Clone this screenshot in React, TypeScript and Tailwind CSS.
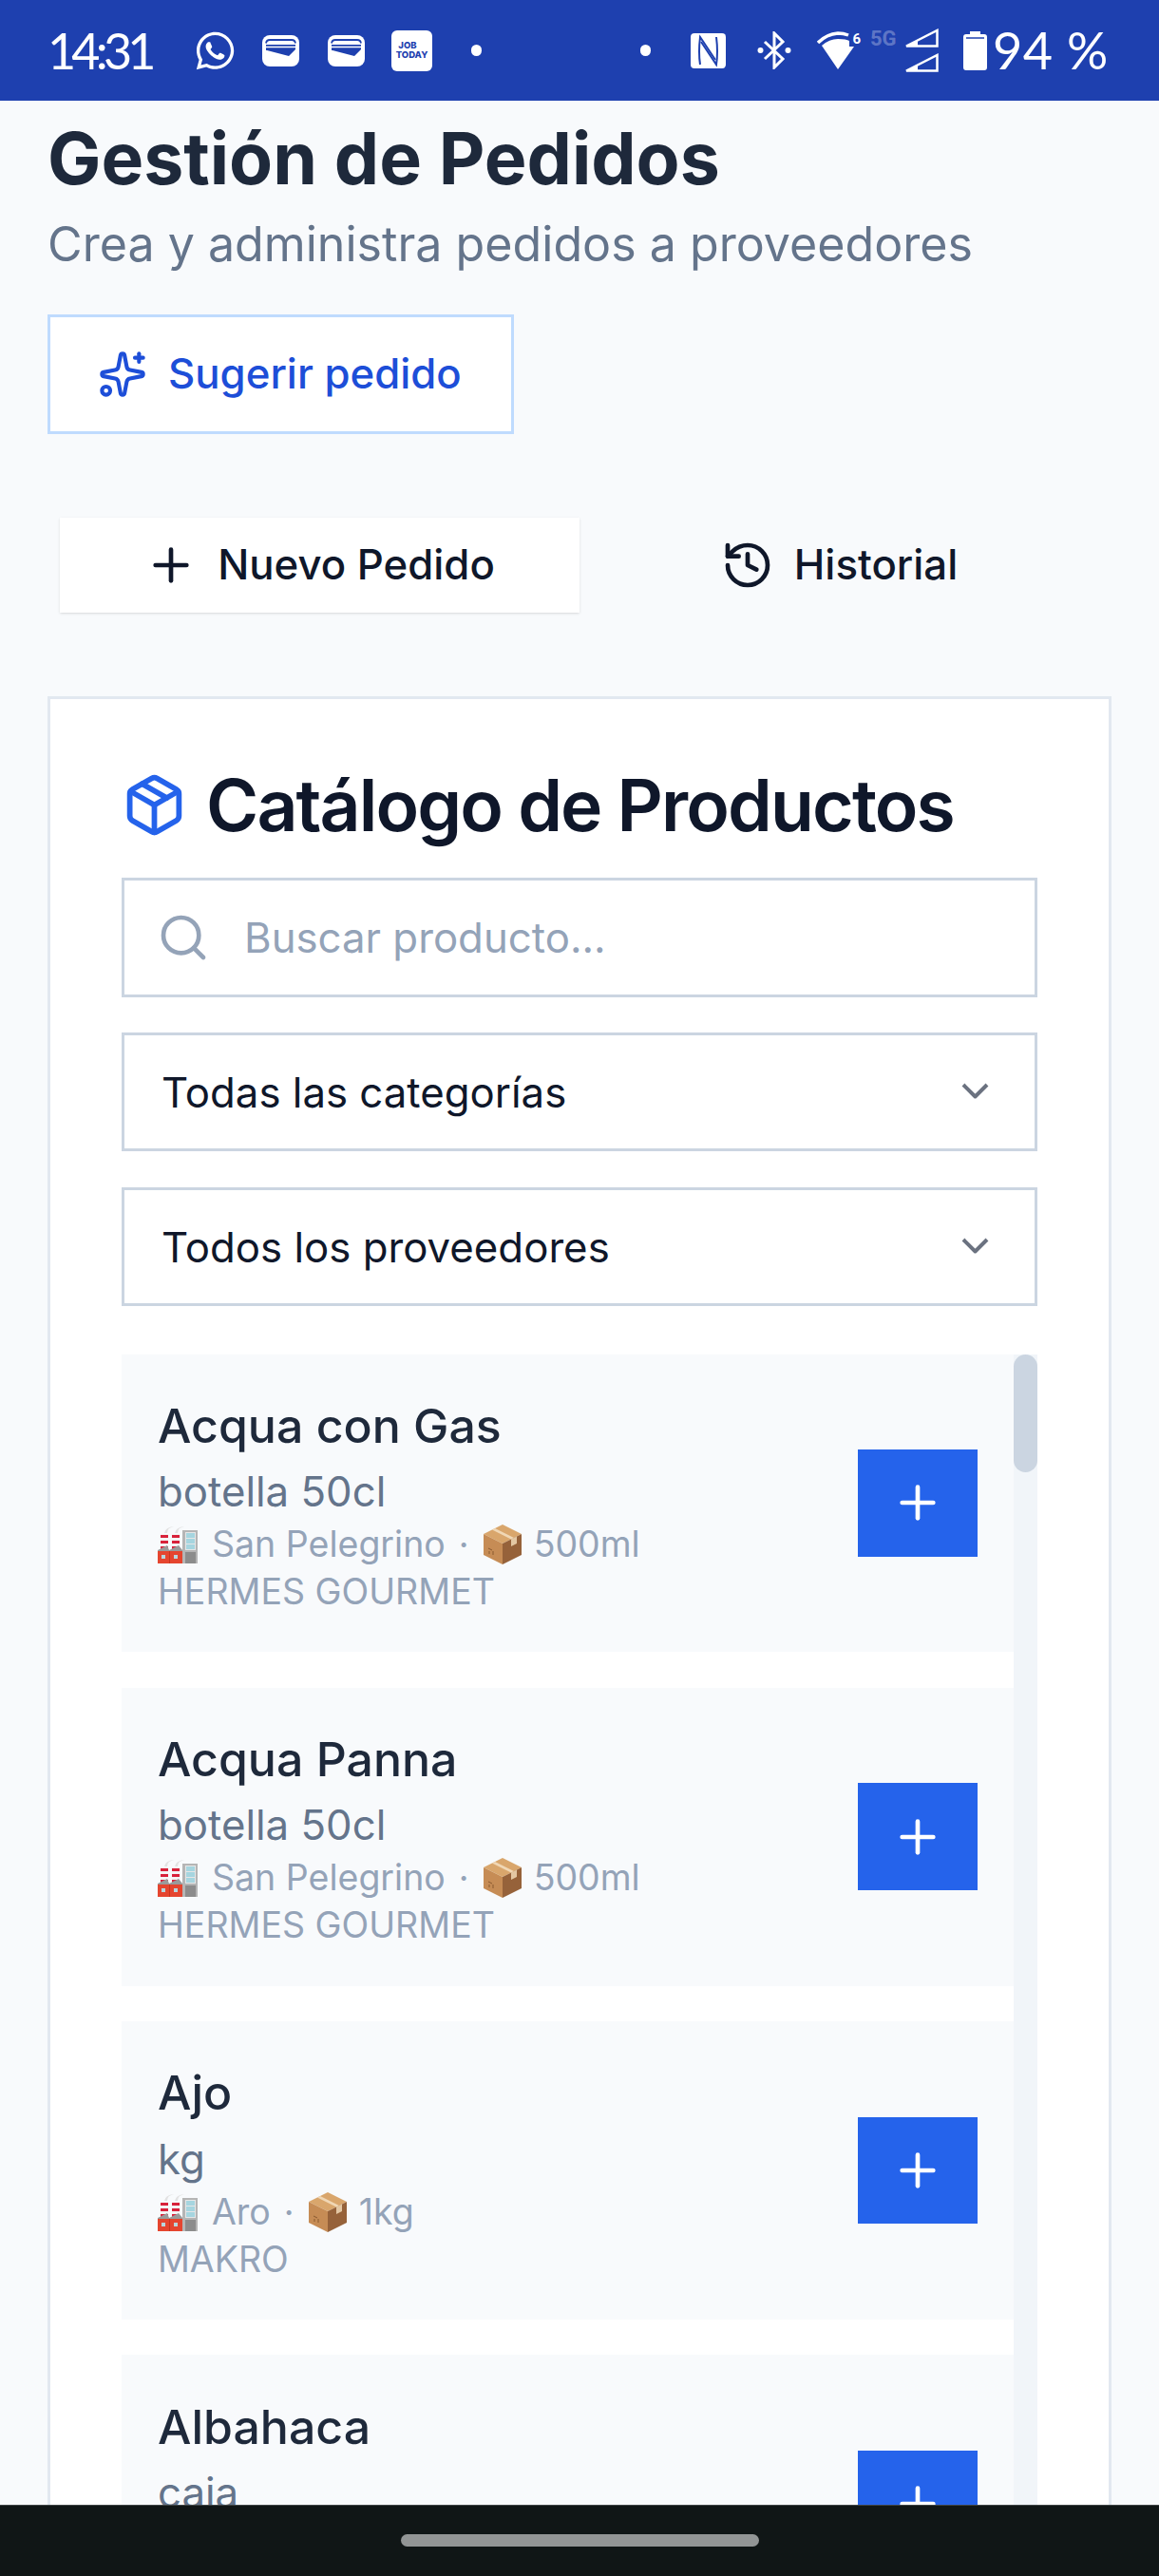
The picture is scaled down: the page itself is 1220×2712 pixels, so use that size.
import { History, Package, Plus, Search, Sparkles } from "lucide-react";
import { FaWhatsapp } from "react-icons/fa";

const products = [
  { name: "Acqua con Gas", unit: "botella 50cl", brand: "San Pelegrino", size: "500ml", vendor: "HERMES GOURMET" },
  { name: "Acqua Panna", unit: "botella 50cl", brand: "San Pelegrino", size: "500ml", vendor: "HERMES GOURMET" },
  { name: "Ajo", unit: "kg", brand: "Aro", size: "1kg", vendor: "MAKRO" },
  { name: "Albahaca", unit: "caja", brand: "Aro", size: "1kg", vendor: "MAKRO" },
];

function WalletIcon() {
  return (
    <svg width="39" height="33" viewBox="0 0 39 33">
      <rect width="39" height="33" rx="8" fill="#fff" />
      <path d="M4 8.5Q4.5 5 8 5H31Q34.500 5 35 8.500" fill="none" stroke="#1e40af" strokeWidth="1.800" />
      <path d="M4 10H35V15L28 22L5 16H4Z" fill="#1e40af" />
      <path d="M4 12.500H35" stroke="#fff" strokeWidth="1.500" />
    </svg>
  );
}

function FactoryEmoji() {
  return (
    <svg width="42" height="40" viewBox="0 0 42 40" className="shrink-0">
      <path d="M7 8Q8 2 17 1L12 3Q10 5 10 8Z" fill="#e2e2e2" />
      <path d="M18 8Q19 2 28 1L23 3Q21 5 21 8Z" fill="#e2e2e2" />
      <rect x="3" y="9" width="8" height="17" fill="#f4f4f4" />
      <rect x="15" y="9" width="8" height="17" fill="#f4f4f4" />
      <path d="M3 10H11V13H3ZM3 16H11V19H3ZM3 22H11V25H3ZM15 10H23V13H15ZM15 16H23V19H15ZM15 22H23V25H15Z" fill="#d8223a" />
      <path d="M0 26L10 21L12 26L22 21L26 26V40H0Z" fill="#9a9a9a" />
      <rect y="27" width="26" height="13" fill="#e5452f" />
      <rect x="4" y="31" width="4" height="4" fill="#b9d6dc" />
      <rect x="17" y="31" width="4" height="4" fill="#b9d6dc" />
      <path d="M12.500 27V40" stroke="#c9341f" />
      <rect x="26" y="5" width="16" height="35" fill="#b5b5b5" />
      <rect x="29" y="7" width="11" height="19" fill="#e6e6e6" />
      <path d="M30 8H39V13H30ZM30 14H39V19H30ZM30 20H39V25H30Z" fill="#a6d5df" />
      <rect x="29" y="28" width="11" height="12" fill="#8c8c8c" />
    </svg>
  );
}

function BoxEmoji() {
  return (
    <svg width="40" height="42" viewBox="0 0 40 42" className="shrink-0">
      <path d="M20 0L40 10L20 20L0 10Z" fill="#d9a66c" />
      <path d="M0 10L20 20V42L0 32Z" fill="#c68c55" />
      <path d="M40 10L20 20V42L40 32Z" fill="#96623a" />
      <path d="M9 5.500L29 15.500L32 14L12 4Z" fill="#f0d7b5" />
      <path d="M29 15.500L35 12.500V20L29 23Z" fill="#e3c7a3" />
      <path d="M5 25L9 27M6 28V31M10 28V32" stroke="#8a5a30" strokeWidth="1" />
    </svg>
  );
}

function SelectChevron() {
  return (
    <svg width="29" height="18" viewBox="0 0 29 18" className="shrink-0">
      <path d="M2 2L14.500 14.500L27 2" fill="none" stroke="#6b7280" strokeWidth="4" strokeLinejoin="round" />
    </svg>
  );
}

function StatusBar() {
  return (
    <div className="flex h-[106px] shrink-0 items-center bg-[#1e40af] font-['Lato',sans-serif] text-white">
      <span className="ml-[50px] w-[110px] text-[52px] leading-none font-normal tracking-[-4.800px]">14:31</span>
      <FaWhatsapp size={45} className="ml-[44px] shrink-0" />
      <div className="ml-[27px] flex gap-[30px]">
        <WalletIcon />
        <WalletIcon />
      </div>
      <div className="ml-[28px] flex h-[43px] w-[43px] shrink-0 flex-col items-center justify-center rounded-[6px] bg-white font-['Inter',sans-serif] text-[9.500px] leading-[10px] font-extrabold text-[#1e40af]">
        <span className="-ml-[9px]">JOB</span>
        <span>TODAY</span>
      </div>
      <span className="ml-[41px] h-[12px] w-[11px] rounded-full bg-white" />
      <span className="ml-[167px] h-[12px] w-[11px] rounded-full bg-white" />
      <svg width="37" height="37" viewBox="0 0 37 37" className="ml-[42px] shrink-0">
        <rect width="37" height="37" rx="4" fill="#fff" />
        <path d="M10 33Q8 20 10 4L26 28" fill="none" stroke="#1e40af" strokeWidth="2" />
        <path d="M27 4Q29 20 27 33L11 9" fill="none" stroke="#1e40af" strokeWidth="2" />
      </svg>
      <svg width="36" height="40" viewBox="0 0 36 40" className="ml-[33px] shrink-0">
        <path d="M8 11L27 29L18 38V2L27 11L8 29" fill="none" stroke="#fff" strokeWidth="3" />
        <circle cx="3.500" cy="20" r="3" fill="#fff" />
        <circle cx="32.500" cy="20" r="3" fill="#fff" />
      </svg>
      <div className="relative ml-[27px] shrink-0">
        <svg width="46" height="41" viewBox="0 0 46 41" className="block">
          <path d="M22 40L5 15Q13 8 22 8T34 10V16H39Z" fill="#fff" />
          <path d="M1 12Q10 3 22 2Q28 2 33 4" fill="none" stroke="#fff" strokeWidth="3.500" />
        </svg>
        <span className="absolute top-[0px] right-[0px] font-['Roboto',sans-serif] text-[15px] leading-[16px] font-bold">6</span>
      </div>
      <div className="ml-[10px] flex h-[44px] w-[32px] shrink-0 flex-col">
        <span className="font-['Roboto',sans-serif] text-[22px] leading-[20px] font-bold text-white/30">5G</span>
      </div>
      <div className="ml-[3px] flex shrink-0 flex-col gap-[6px]">
        <svg width="37" height="20" viewBox="0 0 37 20">
          <path d="M3 18.500L35.500 2V18.500Z" fill="none" stroke="#fff" strokeWidth="2.500" />
          <path d="M3 18.500L15 12V18.500Z" fill="#fff" />
        </svg>
        <svg width="37" height="20" viewBox="0 0 37 20">
          <path d="M3 18.500L35.500 2V18.500Z" fill="none" stroke="#fff" strokeWidth="2.500" />
          <path d="M3 18.500L15 12V18.500Z" fill="#fff" />
        </svg>
      </div>
      <svg width="25" height="41" viewBox="0 0 25 41" className="ml-[26px] shrink-0">
        <path d="M7 0H18V3H22Q25 3 25 6V38Q25 41 22 41H3Q0 41 0 38V6Q0 3 3 3H7Z" fill="#fff" />
        <path d="M3 7H22" stroke="#1e40af" strokeWidth="1.500" />
      </svg>
      <span className="ml-[6px] text-[54px] leading-none font-normal tracking-[0.5px] whitespace-nowrap">94 %</span>
    </div>
  );
}

function ProductCard({ p }: { p: (typeof products)[number] }) {
  return (
    <div className="flex min-h-[313.800px] items-center justify-between bg-[#f8fafc] pr-[38px] pl-[38px]">
      <div className="min-w-0 flex-1">
        <div className="text-[50px] leading-[75px] font-[450] text-[#1e293b]">{p.name}</div>
        <div className="-mb-[1.500px] pt-[1.500px] text-[43.750px] leading-[62.500px] text-[#64748b]">{p.unit}</div>
        <div className="flex items-center text-[37.500px] leading-[50px] text-[#94a3b8]">
          <FactoryEmoji />
          <span className="ml-[15px]">{p.brand}</span>
          <span className="mr-[15px] ml-[14px]">·</span>
          <BoxEmoji />
          <span className="ml-[13px]">{p.size}</span>
        </div>
        <div className="text-[37.500px] leading-[50px] text-[#94a3b8]">{p.vendor}</div>
      </div>
      <button className="flex h-[112.500px] w-[126px] shrink-0 items-center justify-center bg-[#2563eb] text-white">
        <Plus size={56} />
      </button>
    </div>
  );
}

function Select({ label }: { label: string }) {
  return (
    <div className="flex h-[125px] items-center justify-between border-[3px] border-[#cbd5e1] bg-white pr-[48px] pl-[39px] text-[43.750px] text-[#0f172a]">
      <span className="pt-[3px]">{label}</span>
      <SelectChevron />
    </div>
  );
}

export default function App() {
  return (
    <div className="flex h-[2712px] w-[1220px] flex-col overflow-hidden bg-[#f8fafc] font-['Inter',sans-serif]">
      <StatusBar />
      <main className="min-h-0 flex-1 overflow-hidden px-[50px] pt-[11px]">
        <h1 className="text-[75.150px] leading-[100px] font-bold text-[#1e293b]">Gestión de Pedidos</h1>
        <p className="-mb-[1.500px] pt-[1.500px] text-[50.150px] leading-[75px] text-[#64748b]">Crea y administra pedidos a proveedores</p>
        <button className="mt-[39px] flex h-[126px] w-[491px] items-center justify-start gap-[22px] border-[3px] border-[#bfdbfe] bg-white pl-[50px] text-[43.750px] font-[450] text-[#1d4ed8]">
          <Sparkles size={52} strokeWidth={1.900} />
          Sugerir pedido
        </button>

        <div className="mt-[88px] grid grid-cols-2 px-[13px] text-[43.750px] font-[450] text-[#0f172a]">
          <button className="flex h-[100px] items-center justify-center gap-[21px] bg-white shadow-sm">
            <Plus size={56} />
            Nuevo Pedido
          </button>
          <button className="flex h-[100px] items-center justify-center gap-[21px]">
            <History size={56} />
            Historial
          </button>
        </div>

        <section className="mt-[88px] border-[3px] border-[#e2e8f0] bg-white p-[75px]">
          <h2 className="flex h-[75px] items-center gap-[20px] pb-[2px] text-[75px] leading-none font-semibold tracking-[-0.025em] text-[#0f172a]">
            <Package size={69} className="text-[#2563eb]" />
            Catálogo de Productos
          </h2>
          <div className="mt-[37.500px] flex h-[126px] items-center border-[3px] border-[#cbd5e1] bg-white pl-[34px]">
            <Search size={56} className="shrink-0 text-[#94a3b8]" />
            <input
              readOnly
              placeholder="Buscar producto..."
              className="ml-[36px] w-full bg-transparent pt-[2px] text-[43.750px] outline-none placeholder:text-[#94a3b8]"
            />
          </div>
          <div className="mt-[37px] flex flex-col gap-[38px]">
            <Select label="Todas las categorías" />
            <Select label="Todos los proveedores" />
          </div>
          <div className="mt-[51px] flex h-[1211px] overflow-hidden">
            <div className="flex min-w-0 flex-1 flex-col gap-[37.500px]">
              {products.map((p) => (
                <ProductCard key={p.name} p={p} />
              ))}
            </div>
            <div className="w-[25px] shrink-0 bg-[#f1f5f9]">
              <div className="h-[124px] rounded-full bg-[#cbd5e1]" />
            </div>
          </div>
        </section>
      </main>
      <div className="flex h-[75px] shrink-0 items-start justify-center border-t border-t-[#3f4545] bg-[#101616] pt-[30px]">
        <div className="h-[13px] w-[377px] rounded-full bg-[#929595]" />
      </div>
    </div>
  );
}
